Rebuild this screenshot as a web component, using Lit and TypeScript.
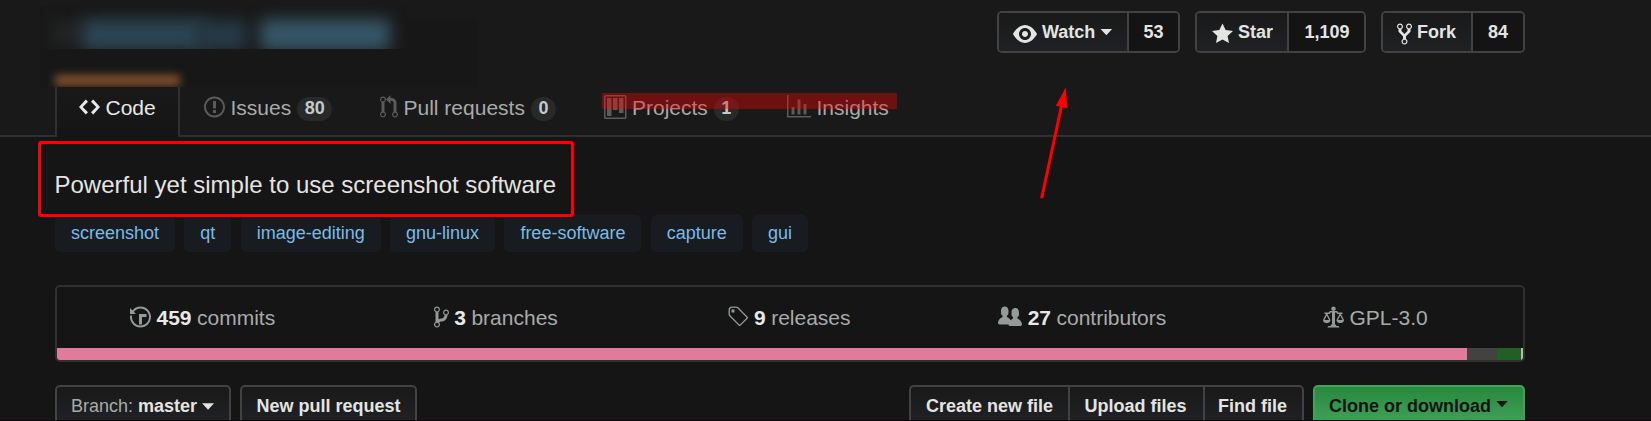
import { LitElement, html, css, svg } from "lit";
import { customElement, property } from "lit/decorators.js";

const ICONS: Record<string, [number, string]> = {
  eye: [16, "M8.06 2C3 2 0 8 0 8s3 6 8.06 6C13 14 16 8 16 8s-3-6-7.94-6zM8 12c-2.2 0-4-1.78-4-4 0-2.2 1.8-4 4-4 2.22 0 4 1.8 4 4 0 2.22-1.78 4-4 4zm2-4c0 1.11-.89 2-2 2-1.11 0-2-.89-2-2 0-1.11.89-2 2-2 1.11 0 2 .89 2 2z"],
  star: [14, "M14 6l-4.9-.64L7 1 4.9 5.36 0 6l3.6 3.26L2.67 14 7 11.67 11.33 14l-.93-4.74z"],
  fork: [10, "M8 1a1.993 1.993 0 0 0-1 3.72V6L5 8 3 6V4.72A1.993 1.993 0 0 0 2 1a1.993 1.993 0 0 0-1 3.72V6.5l3 3v1.78A1.993 1.993 0 0 0 5 15a1.993 1.993 0 0 0 1-3.72V9.5l3-3V4.72A1.993 1.993 0 0 0 8 1zM2 4.2C1.34 4.2.8 3.65.8 3c0-.65.55-1.2 1.2-1.2.65 0 1.2.55 1.2 1.2 0 .65-.55 1.2-1.2 1.2zm3 10c-.66 0-1.2-.55-1.2-1.2 0-.65.55-1.2 1.2-1.2.65 0 1.2.55 1.2 1.2 0 .65-.55 1.2-1.2 1.2zm3-10c-.66 0-1.2-.55-1.2-1.2 0-.65.55-1.2 1.2-1.2.65 0 1.2.55 1.2 1.2 0 .65-.55 1.2-1.2 1.2z"],
  code: [14, "M9.5 3L8 4.5 11.5 8 8 11.5 9.5 13 14 8 9.5 3zm-5 0L0 8l4.5 5L6 11.5 2.5 8 6 4.5 4.5 3z"],
  issue: [14, "M7 2.3c3.14 0 5.7 2.56 5.7 5.7s-2.56 5.7-5.7 5.7A5.71 5.71 0 0 1 1.3 8c0-3.14 2.56-5.7 5.7-5.7zM7 1C3.14 1 0 4.14 0 8s3.14 7 7 7 7-3.14 7-7-3.14-7-7-7zm1 3H6v5h2V4zm0 6H6v2h2v-2z"],
  pull: [12, "M11 11.28V5c-.03-.78-.34-1.47-.94-2.06C9.46 2.35 8.78 2.03 8 2H7V0L4 3l3 3V4h1c.27.02.48.11.69.31.21.2.3.42.31.69v6.28A1.993 1.993 0 0 0 10 15a1.993 1.993 0 0 0 1-3.72zm-1 2.92c-.66 0-1.2-.55-1.2-1.2 0-.65.55-1.2 1.2-1.2.65 0 1.2.55 1.2 1.2 0 .65-.55 1.2-1.2 1.2zM4 3c0-1.11-.89-2-2-2a1.993 1.993 0 0 0-1 3.72v6.56A1.993 1.993 0 0 0 2 15a1.993 1.993 0 0 0 1-3.72V4.72c.59-.34 1-.98 1-1.72zm-.8 10c0 .66-.55 1.2-1.2 1.2-.65 0-1.2-.55-1.2-1.2 0-.65.55-1.2 1.2-1.2.65 0 1.2.55 1.2 1.2zM2 4.2C1.34 4.2.8 3.65.8 3c0-.65.55-1.2 1.2-1.2.65 0 1.2.55 1.2 1.2 0 .65-.55 1.2-1.2 1.2z"],
  project: [15, "M10 12h3V2h-3v10zm-4-2h3V2H6v8zm-4 4h3V2H2v12zm-1 1h13V1H1v14zM14 0H1a1 1 0 0 0-1 1v14a1 1 0 0 0 1 1h13a1 1 0 0 0 1-1V1a1 1 0 0 0-1-1z"],
  graph: [16, "M16 14v1H0V0h1v14h15zM5 13H3V8h2v5zm4 0H7V3h2v10zm4 0h-2V6h2v7z"],
  history: [14, "M8 13H6V6h5v2H8v5zM7 1C4.81 1 2.87 2.02 1.59 3.59L0 2v4h4L2.5 4.5C3.55 3.17 5.17 2.3 7 2.3c3.14 0 5.7 2.56 5.7 5.7s-2.56 5.7-5.7 5.7A5.71 5.71 0 0 1 1.3 8c0-.34.03-.67.09-1H.08C.03 7.33 0 7.66 0 8c0 3.86 3.14 7 7 7s7-3.14 7-7-3.14-7-7-7z"],
  branch: [10, "M10 5c0-1.11-.89-2-2-2a1.993 1.993 0 0 0-1 3.72v.3c-.02.52-.23.98-.63 1.38-.4.4-.86.61-1.38.63-.83.02-1.48.16-2 .45V4.72a1.993 1.993 0 0 0-1-3.72C.88 1 0 1.89 0 3a2 2 0 0 0 1 1.72v6.56c-.59.35-1 .99-1 1.72 0 1.11.89 2 2 2 1.11 0 2-.89 2-2 0-.53-.2-1-.53-1.36.09-.06.48-.41.59-.47.25-.11.56-.17.94-.17 1.05-.05 1.95-.45 2.75-1.25S8.95 7.77 9 6.73h-.02C9.59 6.37 10 5.73 10 5zM2 1.8c.66 0 1.2.55 1.2 1.2 0 .65-.55 1.2-1.2 1.2C1.35 4.2.8 3.65.8 3c0-.65.55-1.2 1.2-1.2zm0 12.41c-.66 0-1.2-.55-1.2-1.2 0-.65.55-1.2 1.2-1.2.65 0 1.2.55 1.2 1.2 0 .65-.55 1.2-1.2 1.2zm6-8c-.66 0-1.2-.55-1.2-1.2 0-.65.55-1.2 1.2-1.2.65 0 1.2.55 1.2 1.2 0 .65-.55 1.2-1.2 1.2z"],
  tag: [14, "M7.685 1.72a2.49 2.49 0 0 0-1.76-.726H3.48A2.5 2.5 0 0 0 .994 3.48v2.456c0 .656.269 1.292.726 1.76l6.024 6.024a.99.99 0 0 0 1.402 0l4.563-4.563a.99.99 0 0 0 0-1.402L7.685 1.72zM2.366 7.048a1.54 1.54 0 0 1-.467-1.123V3.48c0-.874.716-1.58 1.58-1.58h2.456c.418 0 .825.159 1.123.467l6.104 6.094-4.702 4.702-6.094-6.114zm.626-4.066h1.989v1.989H2.982V2.982h.01z"],
  people: [16, "M16 12.999c0 .439-.45 1-1 1H7.995c-.539 0-.994-.447-.995-.999H1c-.54 0-1-.561-1-1 0-2.634 3-4 3-4s.229-.409 0-1c-.841-.621-1.058-.59-1-3 .058-2.419 1.367-3 2.5-3s2.442.58 2.5 3c.058 2.41-.159 2.379-1 3-.229.59 0 1 0 1s1.549.711 2.42 2.088C9.196 9.369 10 8.999 10 8.999s.229-.409 0-1c-.841-.62-1.058-.59-1-2.999.058-2.419 1.367-3 2.5-3s2.437.581 2.495 3c.059 2.41-.158 2.38-1 3-.229.59 0 1 0 1s3.005 1.366 3.005 4z"],
  law: [14, "M7 4c-.83 0-1.5-.67-1.5-1.5S6.17 1 7 1s1.5.67 1.5 1.5S7.83 4 7 4zm7 6c0 1.11-.89 2-2 2h-1c-1.11 0-2-.89-2-2l2-4h-1c-.55 0-1-.45-1-1H8v8c.42 0 1 .45 1 1h1c.42 0 1 .45 1 1H3c0-.55.58-1 1-1h1c0-.55.58-1 1-1h.03L6 5H5c0 .55-.45 1-1 1H3l2 4c0 1.11-.89 2-2 2H2c-1.11 0-2-.89-2-2l2-4H1V5h3c0-.55.45-1 1-1h4c.55 0 1 .45 1 1h3v1h-1l2 4zM2.5 7L1 10h3L2.5 7zM13 10l-1.5-3-1.5 3h3z"],
};

@customElement("oct-icon")
class OctIcon extends LitElement {
  @property() name = "eye";
  static styles = css`
    :host { display: block; flex: none; height: 24px; }
    svg { display: block; fill: currentColor; }
  `;
  render() {
    const [w, d] = ICONS[this.name];
    return html`<svg width=${w * 1.5} height="24" viewBox="0 0 ${w} 16">${svg`<path fill-rule="evenodd" d=${d}></path>`}</svg>`;
  }
}

const SOCIAL = [
  { cls: "watch", icon: "eye", label: "Watch", caret: true, count: "53" },
  { cls: "star", icon: "star", label: "Star", caret: false, count: "1,109" },
  { cls: "fork", icon: "fork", label: "Fork", caret: false, count: "84" },
];
const TABS = [
  { cls: "t-code", icon: "code", label: "Code", count: "" },
  { cls: "t-issues", icon: "issue", label: "Issues", count: "80" },
  { cls: "t-pulls", icon: "pull", label: "Pull requests", count: "0" },
  { cls: "t-projects", icon: "project", label: "Projects", count: "1" },
  { cls: "t-insights", icon: "graph", label: "Insights", count: "" },
];
const TOPICS = ["screenshot", "qt", "image-editing", "gnu-linux", "free-software", "capture", "gui"];
const STATS = [
  ["history", "459", "commits"],
  ["branch", "3", "branches"],
  ["tag", "9", "releases"],
  ["people", "27", "contributors"],
  ["law", "", "GPL-3.0"],
];
const LANGS: [string, number][] = [["#e17b9b", 1410], ["#444241", 30], ["#225f27", 24], ["#b5bdb0", 2]];

@customElement("app-root")
class AppRoot extends LitElement {
  static styles = css`
    :host {
      display: block; position: relative; width: 1651px; height: 421px; overflow: hidden;
      background: #151515; color: #e4e4e2; font-family: "Liberation Sans", Arial, sans-serif;
      font-size: 18px; white-space: nowrap;
    }
    * { box-sizing: border-box; }
    .head { display: flex; flex-direction: column; justify-content: space-between; height: 137px; padding: 11px 126px 0 55px; background: #191919; box-shadow: inset 0 -2px #303030; }
    .social { display: flex; justify-content: flex-end; gap: 15px; }
    .pair { display: flex; height: 42px; border: 2px solid #424242; border-radius: 5px; font-weight: 700; overflow: hidden; }
    .act { display: flex; align-items: center; padding-left: 14px; background: linear-gradient(#191919, #1f2124); }
    .act oct-icon { margin: 4px 5px 0 0; }
    .num { flex: 1; display: flex; align-items: center; justify-content: center; border-left: 2px solid #424242; background: #141414; }
    .act span, .num { padding-top: 1px; }
    .watch { width: 183px; } .watch .act { width: 128px; }
    .star { width: 171px; } .star .act { width: 90px; padding-left: 15px; }
    .star .num { padding-left: 1px; }
    .fork { width: 144px; } .fork .act { width: 88px; }
    .caret { width: 12px; height: 6.5px; margin-left: 5px; background: currentColor; clip-path: polygon(0 0, 100% 0, 50% 100%); }
    .tabs { display: flex; height: 52px; font-size: 21px; color: #a8abab; }
    .tab { display: flex; align-items: flex-start; padding: 10px 24px 0; line-height: 24px; }
    .tab > span:first-of-type { margin: 1px 0 0 5.5px; }
    .tab oct-icon { color: #5b5b5b; }
    .t-code { width: 125px; padding-left: 22px; border: solid #303030; border-width: 0 2px; background: linear-gradient(#191919, #151515); color: #e8e8e6; border-radius: 0 0 2px 2px; }
    .t-code oct-icon { color: #e8e8e6; }
    .t-issues { width: 176px; }
    .t-pulls { width: 224px; }
    .t-projects { width: 183px; }
    .count { height: 24px; margin: 2px 0 0 6px; padding: 0 7.5px; border-radius: 15px; background: #282a2a; color: #c6c9c9; font-size: 18px; font-weight: 700; line-height: 23px; }
    .main { padding: 0 126px 0 55px; }
    .desc { padding-top: 34px; margin-left: -.5px; height: 78px; font-size: 24px; line-height: 28px; }
    .topics { display: flex; gap: 9.3px; height: 37px; }
    .topic { padding: 0 16px; line-height: 37px; color: #78bce6; background: #181b1f; border-radius: 5px; }
    .summary { height: 77px; margin-top: 33px; border: 2px solid #303030; border-radius: 5px; overflow: hidden; }
    .stats { display: grid; grid-template-columns: repeat(5, 1fr); height: 61px; font-size: 21px; color: #a8abab; }
    .stat { display: flex; justify-content: center; padding: 18px 2px 0 0; line-height: 26px; }
    .stat oct-icon { margin-right: 5.5px; color: #949999; }
    .stat b { margin-right: 5.5px; color: #e8e8e6; }
    .langs { display: flex; height: 12px; }
    .files { display: flex; height: 42px; margin-top: 23px; }
    .btn { display: flex; align-items: center; justify-content: center; height: 42px; border: 2px solid #424242; border-radius: 5px; background: linear-gradient(#191919, #202226); font-weight: 700; padding-top: 1px; }
    .btn i { font-style: normal; font-weight: 400; color: #a8abab; margin-right: 5px; }
    .b-branch { width: 176px; margin-right: 9px; padding-right: 1px; }
    .b-pull { width: 177px; margin-right: auto; }
    .b-create { width: 159px; border-radius: 5px 0 0 5px; border-right: 0; }
    .b-upload { width: 135px; border-radius: 0; border-right: 0; padding-right: 2px; }
    .b-find { width: 101px; border-radius: 0 5px 5px 0; margin-right: 9px; padding-right: 2px; }
    .b-clone { width: 212px; border-color: #43a15c; background: linear-gradient(#26883b, #44a35c); background-origin: border-box; color: #151515; padding-right: 1px; }
    .b-clone .caret { margin-bottom: 5px; }
    .patch { position: absolute; left: 40px; top: 20px; width: 438px; height: 67px; background: #171717; overflow: hidden; }
    .patch.upper { left: 40px; top: 6px; width: 367px; height: 43px; background: #181818; }
    .smear { position: absolute; filter: blur(8px); }
    .s1 { left: 12px; top: 14px; width: 32px; height: 26px; background: #232425; }
    .s2 { left: 42px; top: 13px; width: 122px; height: 32px; background: #2d4554; }
    .s5 { left: 155px; top: 14px; width: 52px; height: 31px; background: #263a46; }
    .s3 { left: 220px; top: 13px; width: 130px; height: 32px; background: #365666; }
    .s4 { left: 15px; top: 55px; width: 125px; height: 11px; background: #84502e; filter: blur(4.5px); }
    .marker { position: absolute; left: 601.5px; top: 93px; width: 295px; height: 16px; background: rgba(255, 0, 0, .36); }
    .frame { position: absolute; left: 38px; top: 140.5px; width: 536px; height: 76px; border: 3px solid #ff0000; border-radius: 3px; }
    .arrow { position: absolute; left: 1030px; top: 80px; }
    .edge { position: absolute; left: 0; right: 0; bottom: 0; height: 1px; background: #0d070b; }
  `;

  render() {
    return html`
      <header class="head">
        <div class="social">
          ${SOCIAL.map((s) => html`<div class="pair ${s.cls}">
            <div class="act"><oct-icon name=${s.icon}></oct-icon><span>${s.label}</span>${s.caret ? html`<div class="caret"></div>` : ""}</div>
            <div class="num">${s.count}</div>
          </div>`)}
        </div>
        <nav class="tabs">
          ${TABS.map((t) => html`<div class="tab ${t.cls}"><oct-icon name=${t.icon}></oct-icon><span>${t.label}</span>${t.count ? html`<span class="count">${t.count}</span>` : ""}</div>`)}
        </nav>
      </header>
      <main class="main">
        <div class="desc">Powerful yet simple to use screenshot software</div>
        <div class="topics">${TOPICS.map((t) => html`<span class="topic">${t}</span>`)}</div>
        <section class="summary">
          <div class="stats">${STATS.map(([icon, n, label]) => html`<div class="stat"><oct-icon name=${icon}></oct-icon>${n ? html`<b>${n}</b>` : ""}<span>${label}</span></div>`)}</div>
          <div class="langs">${LANGS.map(([c, w]) => html`<div style="width:${w}px;background:${c}"></div>`)}</div>
        </section>
        <div class="files">
          <div class="btn b-branch"><i>Branch:</i>master<div class="caret"></div></div>
          <div class="btn b-pull">New pull request</div>
          <div class="btn b-create">Create new file</div>
          <div class="btn b-upload">Upload files</div>
          <div class="btn b-find">Find file</div>
          <div class="btn b-clone">Clone or download<div class="caret"></div></div>
        </div>
      </main>
      <div class="patch"><div class="smear s4"></div></div>
      <div class="patch upper"><div class="smear s1"></div><div class="smear s2"></div><div class="smear s5"></div><div class="smear s3"></div></div>
      <div class="marker"></div>
      <div class="frame"></div>
      <svg class="arrow" width="50" height="125" viewBox="1030 80 50 125">
        <path d="M1041.7 198.3L1061.5 106" stroke="#ff0000" stroke-width="3" fill="none"></path>
        <path d="M1065.7 87.5L1055.8 105.8L1067.5 108.2Z" fill="#ff0000"></path>
      </svg>
      <div class="edge"></div>
    `;
  }
}
